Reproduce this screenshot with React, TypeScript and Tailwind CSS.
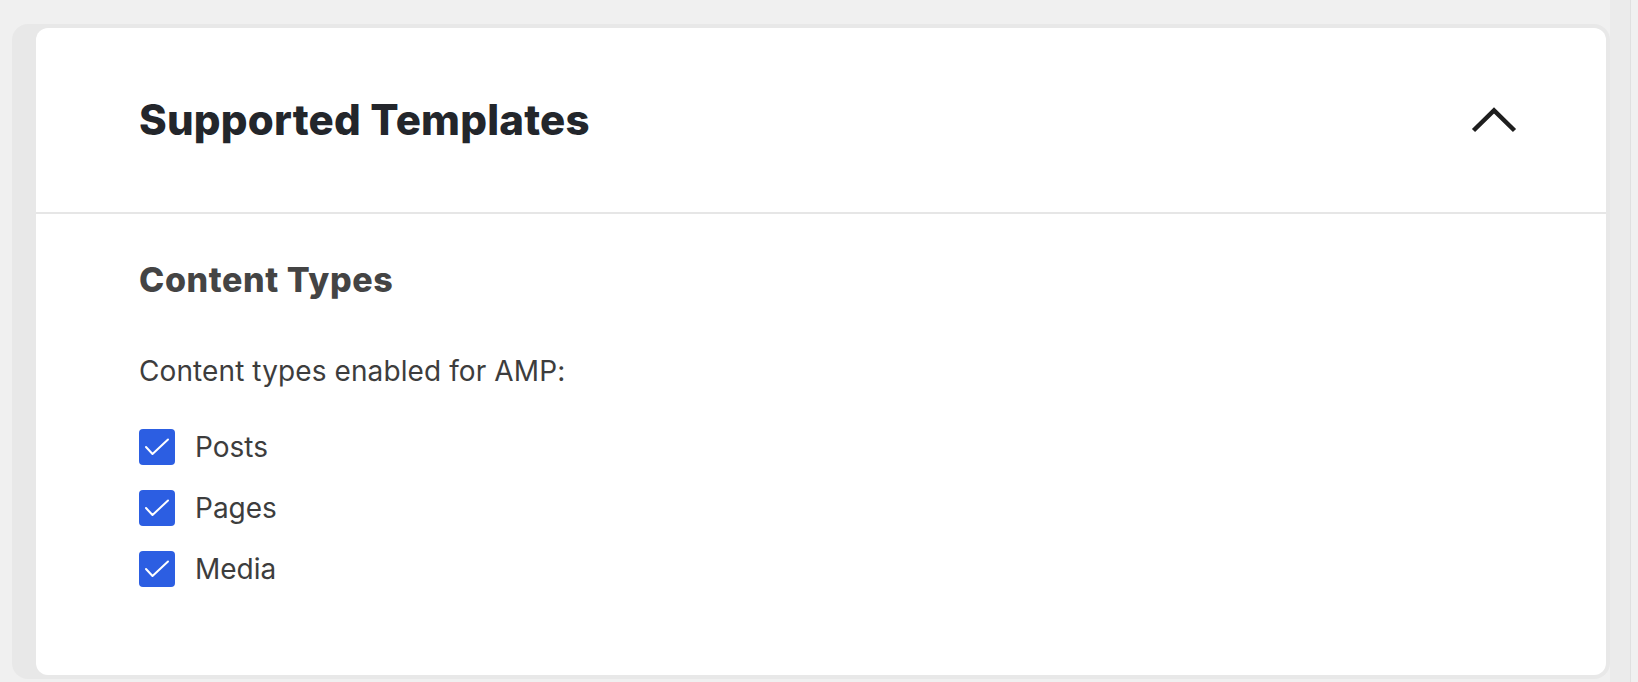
const CheckRow = ({ label }: { label: string }) => {
    return (
        <label className="flex items-center gap-[20px]">
            <span className="flex items-center justify-center size-[36px] rounded-[4px] bg-[#2c5ee2]">
                <svg width="26" height="20" viewBox="0 0 26 20" fill="none">
                    <polyline points="2,10 8.5,17 24,2.5" stroke="#ffffff" strokeWidth="2" strokeLinecap="round" strokeLinejoin="round" />
                </svg>
            </span>
            <span className="text-[28px] leading-[32px] text-[#3d3d3d]">{label}</span>
        </label>
    )
}

const App = () => {
    return (
        <div className="flex w-full h-[682px] overflow-hidden bg-[#f0f0f0] font-['Inter','Liberation_Sans',sans-serif]">
            <div className="pl-[12px] pt-[24px]">
                <div className="w-[1598px] h-[655px] pl-[24px] pt-[4px] pr-[4px] pb-[4px] rounded-[16px] bg-[#e8e8e8]">
                    <div className="flex flex-col h-full rounded-[12px] bg-white">
                        {/* header */}
                        <div className="flex items-center justify-between h-[186px] pl-[103px] pr-[89px] border-b-2 border-[#e6e6e6]">
                            <h2 className="text-[42px] leading-[48px] font-extrabold tracking-[0.2px] text-[#23262b]">
                                Supported Templates
                            </h2>
                            <svg width="46" height="26" viewBox="0 0 46 26" fill="none">
                                <polyline points="2.5,23.5 23,3.5 43.5,23.5" stroke="#1e1e1e" strokeWidth="4.5" />
                            </svg>
                        </div>

                        {/* body */}
                        <div className="flex flex-col pl-[103px] pt-[47px]">
                            <p className="text-[34px] leading-[38px] font-extrabold tracking-[0.6px] text-[#444444]">Content Types</p>
                            <p className="mt-[56px] text-[28px] leading-[32px] tracking-[0.1px] text-[#3d3d3d]">
                                Content types enabled for AMP:
                            </p>
                            <div className="flex flex-col gap-[25px] mt-[42px]">
                                <CheckRow label="Posts" />
                                <CheckRow label="Pages" />
                                <CheckRow label="Media" />
                            </div>
                        </div>
                    </div>
                </div>
            </div>
            <div className="w-[21px] h-full bg-[#ebebeb] border-r border-[#e0e0e0]" />
        </div>
    )
}

export default App
